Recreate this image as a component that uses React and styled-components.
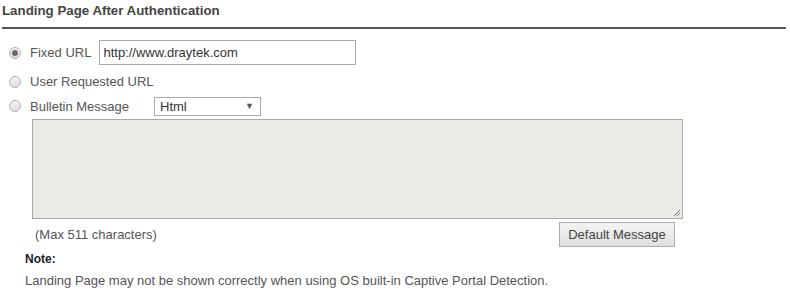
import React from 'react';
import styled, { createGlobalStyle } from 'styled-components';

const GlobalStyle = createGlobalStyle`
  body {
    margin: 0;
    background: #fff;
    font-family: "Liberation Sans", Arial, sans-serif;
    font-size: 13px;
    color: #555;
  }
`;

const Page = styled.div`
  width: 790px;
  height: 292px;
  padding: 2px 4px 0 2px;
  box-sizing: border-box;
`;

const Title = styled.div`
  font-weight: bold;
  font-size: 13.3px;
  color: #444;
  padding: 1px 0 0 0;
  height: 24px;
  line-height: 16px;
  border-bottom: 2px solid #555;
`;

const Options = styled.div`
  padding: 11px 0 0 7px;
  display: flex;
  flex-direction: column;
`;

const OptionRow = styled.label`
  display: flex;
  align-items: center;
  height: ${p => p.h || 24}px;
  margin-bottom: ${p => p.after || 0}px;
`;

const Radio = styled.span`
  width: 12px;
  height: 12px;
  border-radius: 50%;
  box-sizing: border-box;
  border: 1px solid #b3b3b3;
  background: linear-gradient(#f4f4f4, #dcdcdc);
  display: flex;
  align-items: center;
  justify-content: center;
  margin-right: 9px;
  flex-shrink: 0;

  &::after {
    content: '';
    display: ${p => (p.checked ? 'block' : 'none')};
    width: 6px;
    height: 6px;
    border-radius: 50%;
    background: #6a6a6a;
  }
`;

const Label = styled.span`
  width: ${p => (p.w ? `${p.w}px` : 'auto')};
  flex-shrink: 0;
`;

const TextInput = styled.div`
  width: 257px;
  height: 25px;
  box-sizing: border-box;
  border: 1px solid #a9a9a9;
  margin-left: 8px;
  padding: 0 3px;
  line-height: 23px;
  color: #333;
`;

const Select = styled.div`
  width: 107px;
  height: 19px;
  box-sizing: border-box;
  border: 1px solid #a9a9a9;
  display: flex;
  align-items: center;
  justify-content: space-between;
  padding: 0 6px 0 5px;
  color: #333;

  span {
    font-size: 9px;
    color: #555;
  }
`;

const TextArea = styled.div`
  margin: 1px 0 0 23px;
  width: 651px;
  height: 100px;
  box-sizing: border-box;
  border: 1px solid #a9a9a9;
  background: #ebeae4;
  position: relative;
`;

const Grip = styled.svg`
  position: absolute;
  right: 1px;
  bottom: 1px;
`;

const FooterRow = styled.div`
  display: flex;
  align-items: center;
  justify-content: space-between;
  width: 640px;
  margin: 3px 0 0 33px;
`;

const Button = styled.div`
  width: 116px;
  height: 25px;
  box-sizing: border-box;
  border: 1px solid #adadad;
  background: linear-gradient(#f3f3f3, #e0e0e0);
  display: flex;
  align-items: center;
  justify-content: center;
  color: #444;
  font-size: 13px;
`;

const Note = styled.div`
  padding: 1px 0 0 23px;
`;

const NoteTitle = styled.div`
  font-weight: bold;
  color: #222;
  font-size: 12px;
  line-height: 22px;
`;

const NoteText = styled.div`
  line-height: 22px;
`;

const App = () => (
  <>
    <GlobalStyle />
    <Page>
      <Title>Landing Page After Authentication</Title>
      <Options>
        <OptionRow h={25} after={4}>
          <Radio checked />
          <Label>Fixed URL</Label>
          <TextInput>http://www.draytek.com</TextInput>
        </OptionRow>
        <OptionRow h={25}>
          <Radio />
          <Label>User Requested URL</Label>
        </OptionRow>
        <OptionRow h={24}>
          <Radio />
          <Label w={124}>Bulletin Message</Label>
          <Select>
            Html<span>▼</span>
          </Select>
        </OptionRow>
        <TextArea>
          <Grip width="9" height="9" viewBox="0 0 9 9">
            <path d="M8 2 L2 8 M8 5 L5 8" stroke="#777" strokeWidth="1" />
          </Grip>
        </TextArea>
      </Options>
      <FooterRow>
        <span>(Max 511 characters)</span>
        <Button>Default Message</Button>
      </FooterRow>
      <Note>
        <NoteTitle>Note:</NoteTitle>
        <NoteText>Landing Page may not be shown correctly when using OS built-in Captive Portal Detection.</NoteText>
      </Note>
    </Page>
  </>
);

export default App;
